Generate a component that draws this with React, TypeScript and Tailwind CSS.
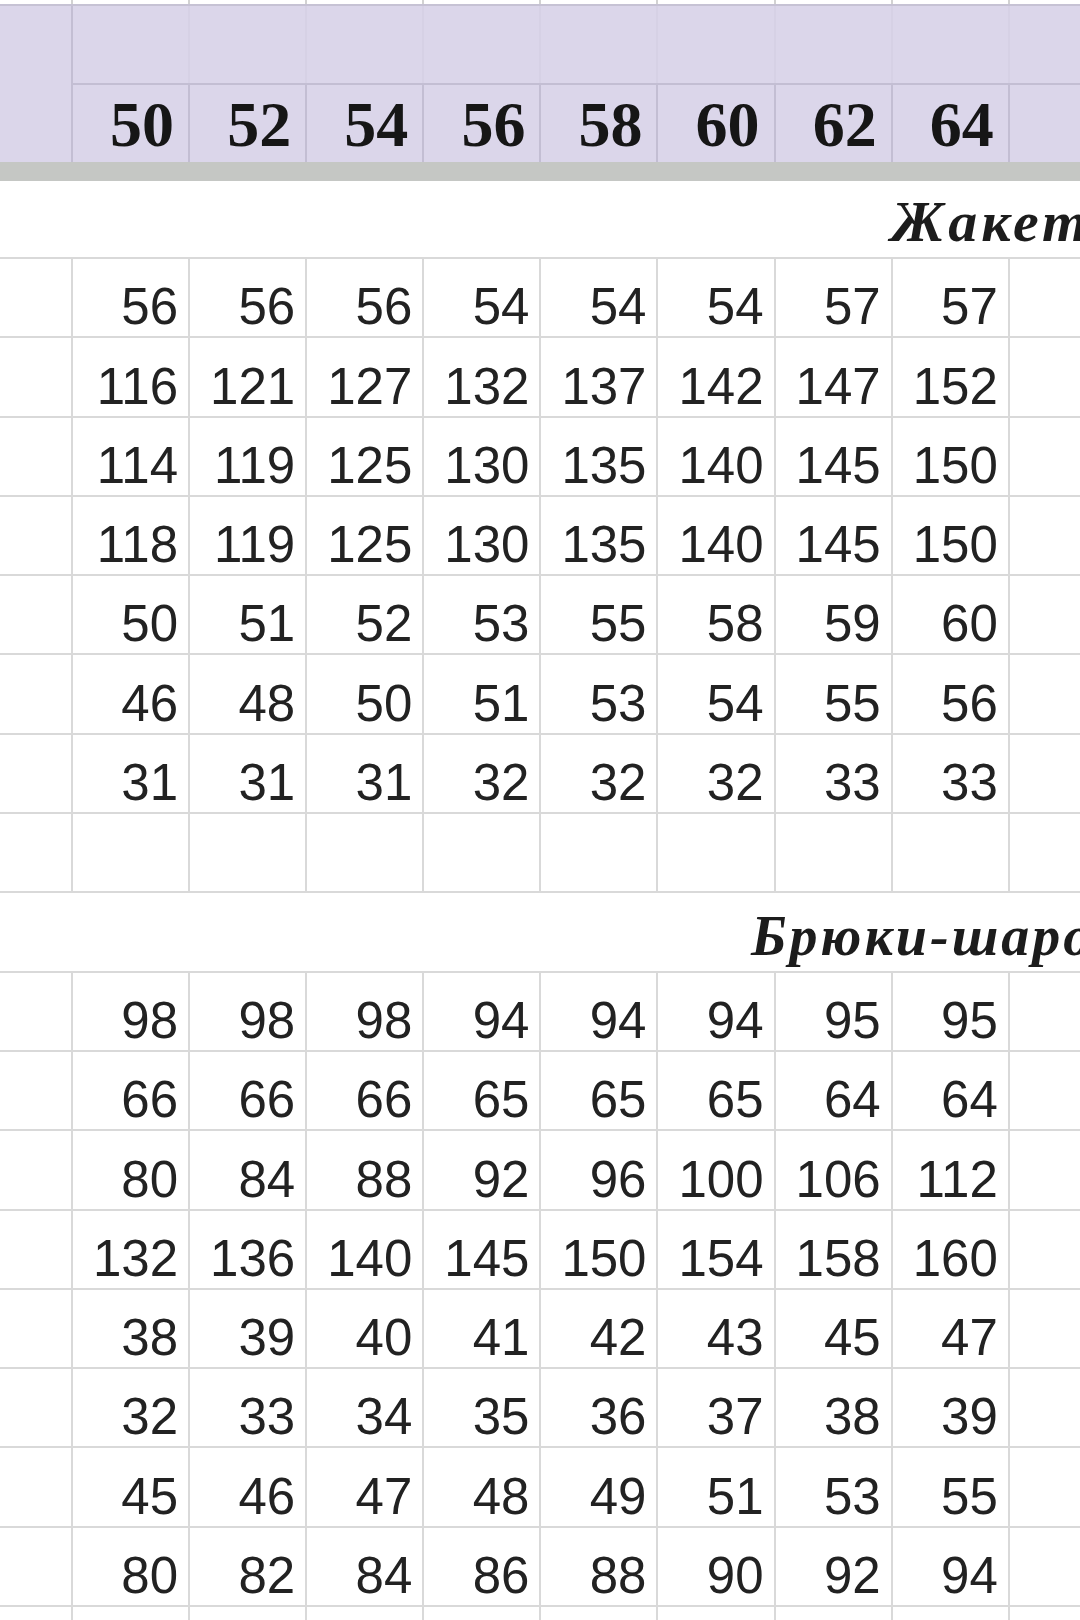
const sizes = [50, 52, 54, 56, 58, 60, 62, 64];

const jacket: (number | null)[][] = [
  [56, 56, 56, 54, 54, 54, 57, 57],
  [116, 121, 127, 132, 137, 142, 147, 152],
  [114, 119, 125, 130, 135, 140, 145, 150],
  [118, 119, 125, 130, 135, 140, 145, 150],
  [50, 51, 52, 53, 55, 58, 59, 60],
  [46, 48, 50, 51, 53, 54, 55, 56],
  [31, 31, 31, 32, 32, 32, 33, 33],
  [null, null, null, null, null, null, null, null],
];

const trousers: (number | null)[][] = [
  [98, 98, 98, 94, 94, 94, 95, 95],
  [66, 66, 66, 65, 65, 65, 64, 64],
  [80, 84, 88, 92, 96, 100, 106, 112],
  [132, 136, 140, 145, 150, 154, 158, 160],
  [38, 39, 40, 41, 42, 43, 45, 47],
  [32, 33, 34, 35, 36, 37, 38, 39],
  [45, 46, 47, 48, 49, 51, 53, 55],
  [80, 82, 84, 86, 88, 90, 92, 94],
  [null, null, null, null, null, null, null, null],
];

function DataRow({ values }: { values: (number | null)[] }) {
  return (
    <div className="grid h-[79.3px] grid-cols-[73px_repeat(8,117.1px)_1fr] border-b-2 border-[#d9d9d9]">
      <div className="border-r-2 border-[#d9d9d9]" />
      {values.map((v, i) => (
        <div
          key={i}
          className="flex items-end justify-end border-r-2 border-[#d9d9d9] pr-[10px] pb-[4px] font-['Liberation_Sans',Arial,sans-serif] text-[51px] leading-none text-[#222]"
        >
          {v ?? ""}
        </div>
      ))}
      <div />
    </div>
  );
}

function TitleRow({ title, pad, size }: { title: string; pad: string; size: string }) {
  return (
    <div className={`flex items-end overflow-hidden border-b-2 border-[#d9d9d9] ${size}`}>
      <span className={`whitespace-nowrap font-['Liberation_Serif','Times_New_Roman',serif] font-bold italic leading-none text-[#1c1c1c] ${pad}`}>
        {title}
      </span>
    </div>
  );
}

export default function App() {
  return (
    <div className="h-[1620px] w-[1080px] overflow-hidden bg-white">
      {/* sliver of the row above the header */}
      <div className="grid h-[6px] grid-cols-[73px_repeat(8,117.1px)_1fr] border-b-2 border-[#c6c2d4]">
        {Array.from({ length: 9 }).map((_, i) => (
          <div key={i} className="border-r-2 border-[#d2d2d2]" />
        ))}
        <div />
      </div>

      <div className="flex h-[156px] bg-[#dbd6ea]">
        <div className="w-[73px] border-r-2 border-[#c3bed3]" />
        <div className="flex flex-1 flex-col">
          <div className="grid h-[79px] grid-cols-[repeat(8,117.1px)_1fr] border-b-2 border-[#c3bed3]">
            {sizes.map((s) => (
              <div key={s} className="border-r-2 border-[#d6d1e5]" />
            ))}
            <div />
          </div>
          <div className="grid flex-1 grid-cols-[repeat(8,117.1px)_1fr]">
            {sizes.map((s) => (
              <div
                key={s}
                className="flex items-end justify-end border-r-2 border-[#c3bed3] pr-[14px] pb-[5px] font-['Liberation_Serif','Times_New_Roman',serif] text-[64px] font-bold leading-none text-[#161616]"
              >
                {s}
              </div>
            ))}
            <div />
          </div>
        </div>
      </div>

      <div className="h-[19px] bg-[#c5c7c4]" />

      <TitleRow title="Жакет" pad="pl-[891px] pb-[6px] text-[58px] tracking-[4px]" size="h-[78px]" />
      {jacket.map((row, i) => (
        <DataRow key={i} values={row} />
      ))}

      <TitleRow title="Брюки-шаровары" pad="pl-[751px] pb-[7px] text-[56px] tracking-[3px]" size="h-[79.3px]" />
      {trousers.map((row, i) => (
        <DataRow key={i} values={row} />
      ))}
    </div>
  );
}
